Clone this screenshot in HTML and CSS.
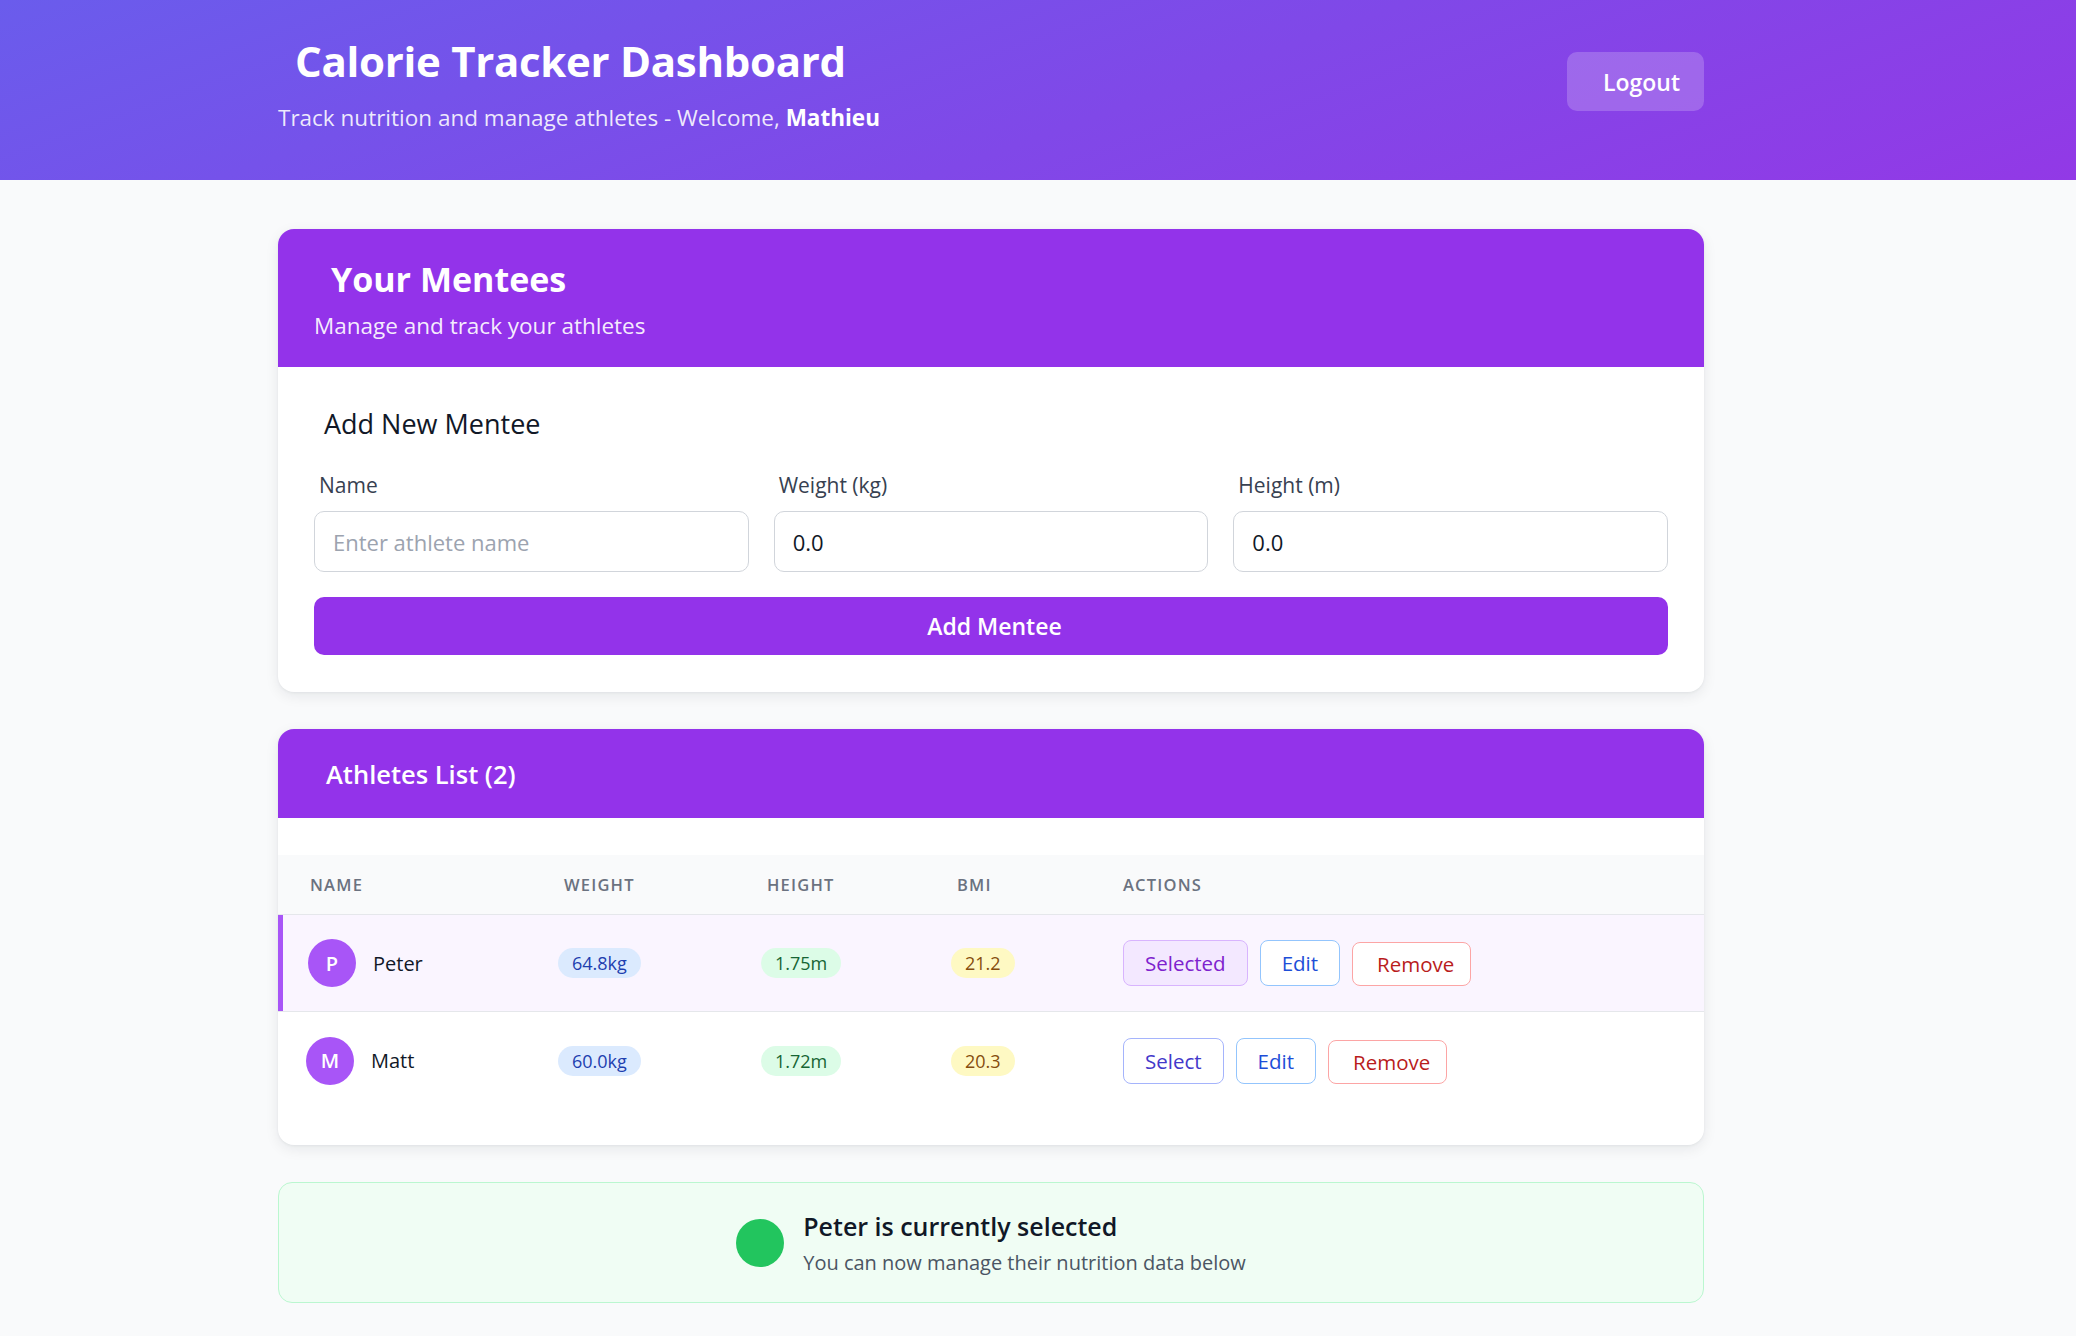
FILE: index.html
```html
<!DOCTYPE html>
<html lang="en">
<head>
<meta charset="utf-8">
<title>Calorie Tracker Dashboard</title>
<link rel="stylesheet" href="styles.css">
</head>
<body>
<header class="topbar">
  <div class="wrap topbar-inner">
    <div class="brand">
      <h1 class="brand-title">Calorie Tracker Dashboard</h1>
      <p class="brand-sub">Track nutrition and manage athletes - Welcome, <strong>Mathieu</strong></p>
    </div>
    <button class="logout">Logout</button>
  </div>
</header>

<main class="wrap main">
  <section class="card">
    <div class="card-head tall">
      <h2 class="card-title">Your Mentees</h2>
      <p class="card-sub">Manage and track your athletes</p>
    </div>
    <div class="card-body">
      <h3 class="form-title">Add New Mentee</h3>
      <div class="form-grid">
        <label class="field">
          <span class="field-label">Name</span>
          <input class="field-input" type="text" placeholder="Enter athlete name">
        </label>
        <label class="field">
          <span class="field-label">Weight (kg)</span>
          <input class="field-input" type="text" value="0.0">
        </label>
        <label class="field">
          <span class="field-label">Height (m)</span>
          <input class="field-input" type="text" value="0.0">
        </label>
      </div>
      <button class="primary-btn">Add Mentee</button>
    </div>
  </section>

  <section class="card">
    <div class="card-head short">
      <h2 class="list-title">Athletes List (2)</h2>
    </div>
    <div class="table">
      <div class="trow thead">
        <div class="th th-name">Name</div>
        <div class="th">Weight</div>
        <div class="th">Height</div>
        <div class="th">BMI</div>
        <div class="th">Actions</div>
      </div>
      <div class="trow tbody selected">
        <div class="td td-name">
          <span class="avatar">P</span>
          <span class="athlete">Peter</span>
        </div>
        <div class="td"><span class="pill blue">64.8kg</span></div>
        <div class="td"><span class="pill green">1.75m</span></div>
        <div class="td"><span class="pill yellow">21.2</span></div>
        <div class="td actions">
          <button class="act act-selected">Selected</button>
          <button class="act act-edit">Edit</button>
          <button class="act act-remove">Remove</button>
        </div>
      </div>
      <div class="trow tbody">
        <div class="td td-name">
          <span class="avatar">M</span>
          <span class="athlete">Matt</span>
        </div>
        <div class="td"><span class="pill blue">60.0kg</span></div>
        <div class="td"><span class="pill green">1.72m</span></div>
        <div class="td"><span class="pill yellow">20.3</span></div>
        <div class="td actions">
          <button class="act act-select">Select</button>
          <button class="act act-edit">Edit</button>
          <button class="act act-remove">Remove</button>
        </div>
      </div>
    </div>
  </section>

  <section class="status">
    <span class="status-dot"></span>
    <div class="status-text">
      <div class="status-title">Peter is currently selected</div>
      <div class="status-sub">You can now manage their nutrition data below</div>
    </div>
  </section>
</main>
</body>
</html>
```

FILE: styles.css
```css
* { box-sizing: border-box; }

body {
  margin: 0;
  background: #f9fafb;
  font-family: "Open Sans", "Noto Sans", sans-serif;
  color: #111827;
}

h1, h2, h3, p { margin: 0; }

button { font-family: inherit; cursor: pointer; }

.wrap {
  width: 1426px;
  margin-left: 278px;
}

/* Header */
.topbar {
  height: 180px;
  background: linear-gradient(160deg, #6a5cec 0%, #8048e8 55%, #9239e6 100%);
  color: #fff;
}

.topbar-inner {
  display: flex;
  justify-content: space-between;
  align-items: flex-start;
  padding-top: 34px;
}

.brand-title {
  font-size: 42px;
  line-height: 54px;
  font-weight: 700;
  padding-left: 17px;
  letter-spacing: -0.3px;
}

.brand-sub {
  margin-top: 15px;
  font-size: 22.5px;
  line-height: 30px;
  color: rgba(255, 255, 255, 0.88);
}

.brand-sub strong { font-weight: 700; color: #fff; }

.logout {
  margin-top: 18px;
  height: 59px;
  width: 137px;
  padding: 0 22px 0 34px;
  border: none;
  border-radius: 10px;
  background: rgba(255, 255, 255, 0.2);
  color: #fff;
  font-size: 23px;
  font-weight: 600;
}

/* Main */
.main {
  padding-top: 49px;
  padding-bottom: 40px;
  display: flex;
  flex-direction: column;
  gap: 37px;
}

.card {
  background: #fff;
  border-radius: 16px;
  overflow: hidden;
  box-shadow: 0 4px 14px rgba(17, 24, 39, 0.08), 0 1px 3px rgba(17, 24, 39, 0.05);
}

.card-head {
  background: #9333ea;
  color: #fff;
  padding: 0 36px;
}

.card-head.tall {
  height: 138px;
  padding-top: 27px;
}

.card-title {
  font-size: 34px;
  line-height: 46px;
  font-weight: 700;
  padding-left: 17px;
}

.card-sub {
  margin-top: 9px;
  font-size: 22.5px;
  line-height: 30px;
  color: rgba(255, 255, 255, 0.92);
}

.card-head.short {
  height: 89px;
  display: flex;
  align-items: center;
  padding-left: 48px;
}

.list-title {
  font-size: 25.5px;
  font-weight: 600;
}

.card-body {
  padding: 40px 36px 37px;
}

.form-title {
  font-size: 27px;
  line-height: 34px;
  font-weight: 500;
  padding-left: 10px;
  color: #111827;
}

.form-grid {
  margin-top: 30px;
  display: grid;
  grid-template-columns: repeat(3, 1fr);
  gap: 25px;
}

.field {
  display: flex;
  flex-direction: column;
  gap: 12px;
}

.field-label {
  font-size: 21px;
  line-height: 28px;
  font-weight: 500;
  color: #374151;
  padding-left: 5px;
}

.field-input {
  height: 61px;
  border: 1px solid #d1d5db;
  border-radius: 10px;
  padding: 0 18px;
  font-family: inherit;
  font-size: 22px;
  color: #111827;
  background: #fff;
  outline: none;
}

.field-input::placeholder { color: #9ca3af; }

.primary-btn {
  margin-top: 25px;
  width: 100%;
  height: 58px;
  padding-left: 13px;
  border: none;
  border-radius: 10px;
  background: #9333ea;
  color: #fff;
  font-size: 23px;
  font-weight: 600;
}

/* Table */
.table {
  margin-top: 37px;
  padding-bottom: 36px;
}

.trow {
  display: grid;
  grid-template-columns: 258px 203px 190px 166px 1fr;
  align-items: center;
}

.thead {
  height: 60px;
  background: #f9fafb;
  border-bottom: 1px solid #e5e7eb;
}

.th {
  padding-left: 28px;
  font-size: 16.5px;
  font-weight: 600;
  letter-spacing: 1.2px;
  text-transform: uppercase;
  color: #6b7280;
}

.th-name { padding-left: 32px; }

.tbody {
  height: 97px;
  border-bottom: 1px solid #e5e7eb;
}

.tbody:last-child { border-bottom: none; }

.tbody.selected {
  background: #faf5ff;
  box-shadow: inset 5px 0 0 #a855f7;
}

.td {
  padding-left: 22px;
  display: flex;
  align-items: center;
}

.td-name {
  padding-left: 28px;
  gap: 17px;
}

.selected .td-name { padding-left: 30px; }

.avatar {
  width: 48px;
  height: 48px;
  border-radius: 50%;
  background: #a855f7;
  color: #fff;
  display: flex;
  align-items: center;
  justify-content: center;
  font-size: 20px;
  font-weight: 600;
}

.athlete {
  font-size: 20px;
  font-weight: 500;
  color: #111827;
}

.pill {
  height: 30px;
  padding: 0 14px;
  border-radius: 15px;
  display: inline-flex;
  align-items: center;
  font-size: 18px;
  font-weight: 500;
}

.pill.blue { background: #dbeafe; color: #1e40af; }
.pill.green { background: #dcfce7; color: #166534; }
.pill.yellow { background: #fef9c3; color: #854d0e; }

.actions {
  padding-left: 28px;
  gap: 12px;
}

.act {
  height: 46px;
  padding: 0 21px;
  border-radius: 8px;
  border: 1px solid;
  background: #fff;
  font-size: 20.5px;
  font-weight: 400;
}

.act-selected { background: #f3e8ff; border-color: #d8b4fe; color: #7e22ce; }
.act-select { border-color: #a5b4fc; color: #4338ca; }
.act-edit { border-color: #93c5fd; color: #1d4ed8; }
.act-remove {
  border-color: #fca5a5;
  color: #b91c1c;
  padding: 0 16px 0 24px;
  height: 44px;
  margin-top: 2px;
}

/* Status */
.status {
  height: 121px;
  background: #f0fdf4;
  border: 1px solid #bbf7d0;
  border-radius: 14px;
  display: flex;
  align-items: center;
  justify-content: center;
  gap: 19px;
}

.status-dot {
  width: 48px;
  height: 48px;
  border-radius: 50%;
  background: #22c55e;
}

.status-title {
  font-size: 25px;
  line-height: 32px;
  font-weight: 600;
  color: #111827;
}

.status-sub {
  margin-top: 8px;
  font-size: 20px;
  line-height: 26px;
  color: #4b5563;
}
```
